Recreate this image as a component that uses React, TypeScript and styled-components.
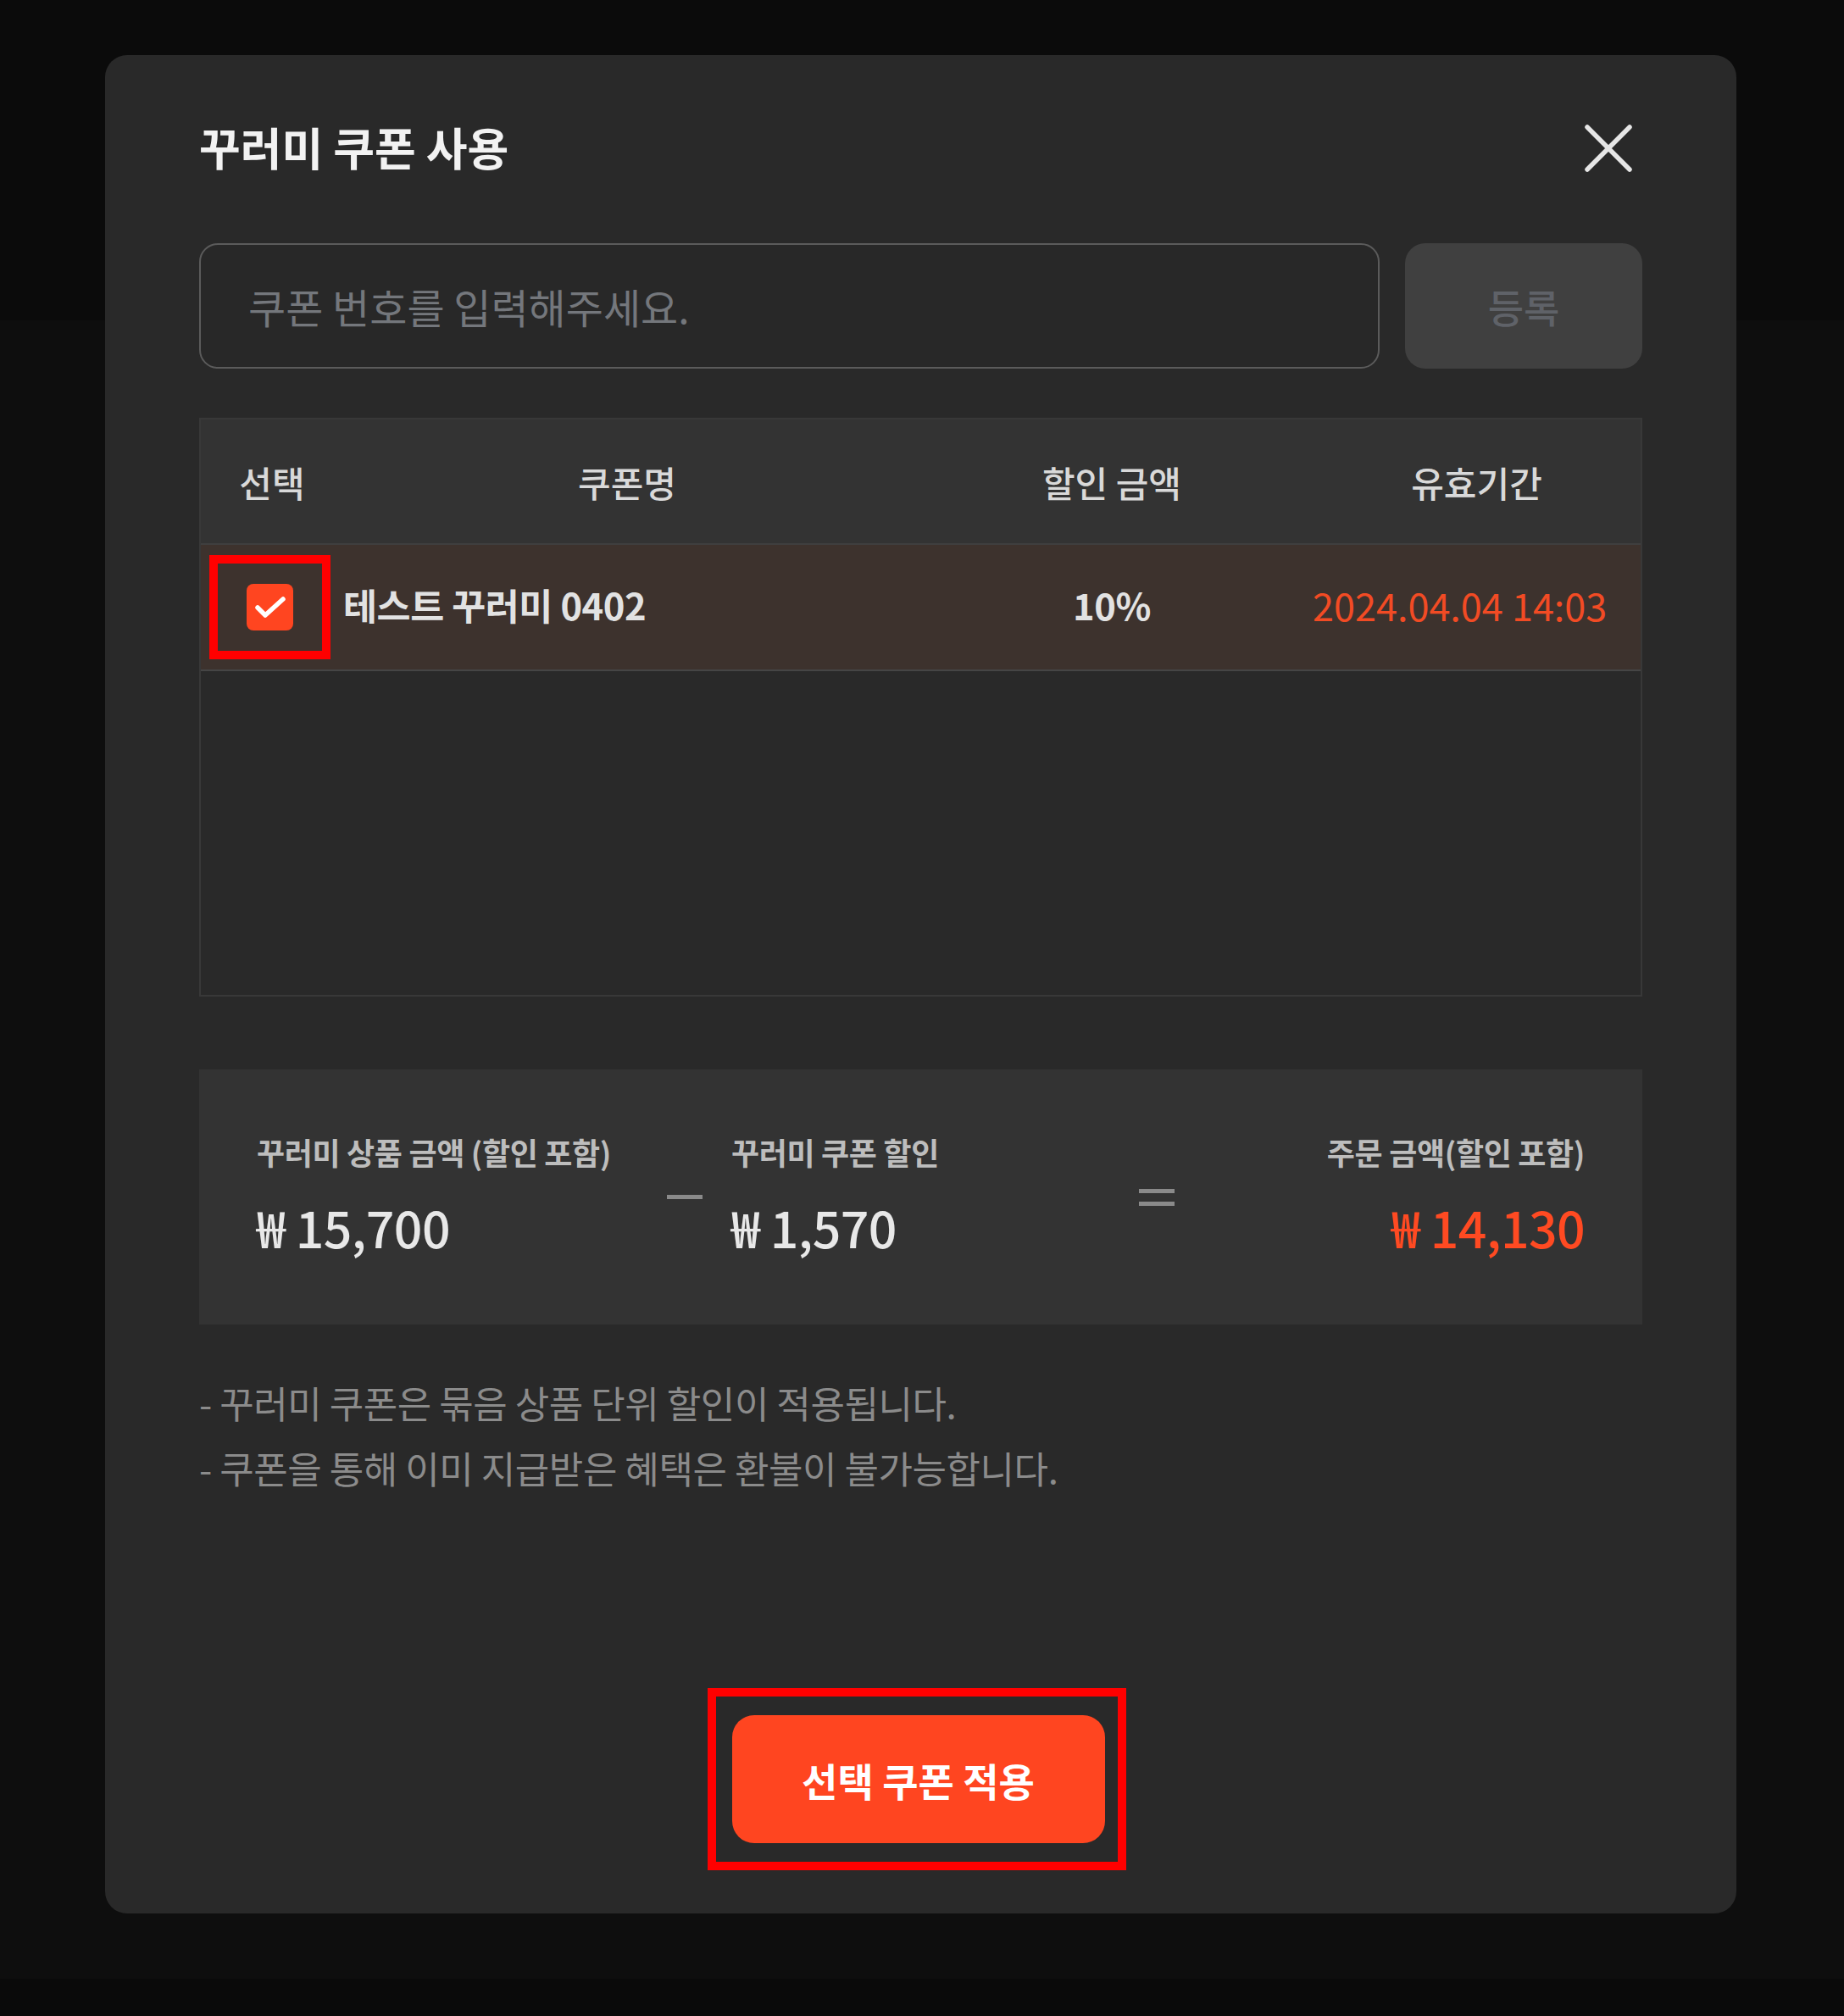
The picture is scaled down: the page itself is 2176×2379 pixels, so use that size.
import React from 'react';
import styled, { createGlobalStyle } from 'styled-components';

const GlobalStyle = createGlobalStyle`
  body {
    margin: 0;
    background: #0b0b0b;
    font-family: "Noto Sans CJK KR", "Noto Sans", sans-serif;
  }
`;

/* page behind the dimmed overlay */
const Page = styled.div`
  min-height: 2379px;
  box-sizing: border-box;
  padding: 65px 0 0 124px;
  background: linear-gradient(
    to bottom,
    #0b0b0b 0,
    #0b0b0b 378px,
    #0e0e0e 378px,
    #0e0e0e 2335px,
    #0a0a0a 2335px
  );
`;

const Modal = styled.div`
  width: 1925px;
  height: 2193px;
  box-sizing: border-box;
  padding: 0 111px 51px;
  background: #292929;
  border-radius: 26px;
  display: flex;
  flex-direction: column;
`;

const Header = styled.div`
  display: flex;
  justify-content: space-between;
  align-items: center;
  height: 60px;
  margin-top: 78px;
`;

const Title = styled.h2`
  margin: 0;
  font-size: 53px;
  font-weight: 700;
  color: #f2f2f2;
`;

const CloseButton = styled.button`
  width: 58px;
  height: 58px;
  padding: 0;
  margin: 4px 11px 0 0;
  border: 0;
  background: none;
  display: flex;
`;

const InputRow = styled.div`
  display: flex;
  gap: 30px;
  height: 148px;
  margin-top: 84px;
`;

const CouponInput = styled.input`
  flex: 1;
  box-sizing: border-box;
  height: 100%;
  padding: 0 56px;
  border: 2px solid #5b5b5b;
  border-radius: 22px;
  background: #282828;
  color: #e0e0e0;
  font-family: inherit;
  font-size: 48px;
  outline: none;

  &::placeholder {
    color: #74777c;
  }
`;

const RegisterButton = styled.button`
  width: 280px;
  height: 100%;
  border: 0;
  border-radius: 24px;
  background: #404040;
  color: #5f6268;
  font-family: inherit;
  font-size: 46px;
  font-weight: 500;
`;

const Table = styled.div`
  margin-top: 58px;
  border: 2px solid #383838;
  height: 683px;
  box-sizing: border-box;
  background: #292929;
`;

const Row = styled.div<{ $head?: boolean }>`
  display: grid;
  grid-template-columns: 168px 670px 474px 1fr;
  align-items: center;
  height: ${p => (p.$head ? '146px' : '147px')};
  background: ${p => (p.$head ? '#333333' : '#3d322d')};
  border-bottom: 2px solid ${p => (p.$head ? '#3f3f3f' : '#454545')};
`;

const HeadCell = styled.div`
  text-align: center;
  font-size: 42px;
  font-weight: 500;
  color: #d9d9d9;
`;

const Cell = styled.div<{ $align?: string }>`
  text-align: ${p => p.$align || 'center'};
  font-size: 43.5px;
  font-weight: 700;
  color: #e2e2e2;
  letter-spacing: -0.01em;
  white-space: nowrap;
  margin-top: -6px;
`;

const DateCell = styled.div`
  display: flex;
  justify-content: flex-end;
  padding-right: 45px;
  font-size: 45px;
  color: #f24b24;
  white-space: nowrap;
  margin-top: -6px;
`;

const SelectCell = styled.div`
  display: flex;
  justify-content: center;
  padding-right: 6px;
`;

/* red review outline from the screenshot */
const Highlight = styled.div<{ $pad: string }>`
  border: 10px solid #ff0000;
  padding: ${p => p.$pad};
  display: flex;
`;

const Checkbox = styled.span`
  width: 55px;
  height: 55px;
  border-radius: 8px;
  background: #ff4520;
  display: flex;
`;

const Summary = styled.div`
  margin-top: 86px;
  height: 301px;
  box-sizing: border-box;
  padding: 0 68px;
  background: #333333;
  display: grid;
  grid-template-columns: 484px 42px 515px 42px 1fr;
  align-items: center;
`;

const SumItem = styled.div<{ $right?: boolean; $indent?: boolean }>`
  display: flex;
  flex-direction: column;
  align-items: ${p => (p.$right ? 'flex-end' : 'flex-start')};
  gap: 34px;
  padding-left: ${p => (p.$indent ? '34px' : '0')};
  margin-top: -6px;
`;

const SumLabel = styled.div`
  font-size: 36px;
  font-weight: 700;
  color: #bdbdbd;
  letter-spacing: -0.01em;
  line-height: 1.2;
  white-space: nowrap;
`;

const SumValue = styled.div<{ $accent?: boolean }>`
  font-size: 59px;
  font-weight: 500;
  color: ${p => (p.$accent ? '#ff4a22' : '#e8e8e8')};
  letter-spacing: -0.01em;
  line-height: 1.1;
  white-space: nowrap;
`;

const Operator = styled.div`
  display: flex;
  flex-direction: column;
  gap: 10px;
  align-items: center;
  justify-content: center;
`;

const Bar = styled.span`
  width: 42px;
  height: 5px;
  background: #8a8a8a;
`;

const Notes = styled.ul`
  margin: 54px 0 0;
  padding: 0;
  list-style: none;
`;

const Note = styled.li`
  font-size: 44px;
  line-height: 77px;
  color: #8b8b8b;
  letter-spacing: -0.01em;
`;

const Footer = styled.div`
  margin-top: auto;
  display: flex;
  justify-content: center;
  padding-right: 10px;
`;

const ApplyButton = styled.button`
  width: 440px;
  height: 151px;
  border: 0;
  border-radius: 26px;
  background: #ff4520;
  color: #ffffff;
  font-family: inherit;
  font-size: 46px;
  font-weight: 700;
`;

const CloseIcon = () => (
  <svg width="58" height="58" viewBox="0 0 58 58">
    <path d="M4 4 L54 54 M54 4 L4 54" stroke="#e6e6e6" strokeWidth="5.5" strokeLinecap="round" />
  </svg>
);

const CheckIcon = () => (
  <svg width="55" height="55" viewBox="0 0 55 55">
    <path d="M13 28 L22 37 L43 18" fill="none" stroke="#ffffff" strokeWidth="5.5" strokeLinecap="round" strokeLinejoin="round" />
  </svg>
);

export default function App() {
  return (
    <Page>
      <GlobalStyle />
      <Modal>
        <Header>
          <Title>꾸러미 쿠폰 사용</Title>
          <CloseButton aria-label="닫기">
            <CloseIcon />
          </CloseButton>
        </Header>

        <InputRow>
          <CouponInput placeholder="쿠폰 번호를 입력해주세요." />
          <RegisterButton>등록</RegisterButton>
        </InputRow>

        <Table>
          <Row $head>
            <HeadCell>선택</HeadCell>
            <HeadCell>쿠폰명</HeadCell>
            <HeadCell>할인 금액</HeadCell>
            <HeadCell>유효기간</HeadCell>
          </Row>
          <Row>
            <SelectCell>
              <Highlight $pad="24px 34px">
                <Checkbox>
                  <CheckIcon />
                </Checkbox>
              </Highlight>
            </SelectCell>
            <Cell $align="left">테스트 꾸러미 0402</Cell>
            <Cell>10%</Cell>
            <DateCell>2024.04.04 14:03</DateCell>
          </Row>
        </Table>

        <Summary>
          <SumItem>
            <SumLabel>꾸러미 상품 금액 (할인 포함)</SumLabel>
            <SumValue>₩ 15,700</SumValue>
          </SumItem>
          <Operator>
            <Bar />
          </Operator>
          <SumItem $indent>
            <SumLabel>꾸러미 쿠폰 할인</SumLabel>
            <SumValue>₩ 1,570</SumValue>
          </SumItem>
          <Operator>
            <Bar />
            <Bar />
          </Operator>
          <SumItem $right>
            <SumLabel>주문 금액(할인 포함)</SumLabel>
            <SumValue $accent>₩ 14,130</SumValue>
          </SumItem>
        </Summary>

        <Notes>
          <Note>- 꾸러미 쿠폰은 묶음 상품 단위 할인이 적용됩니다.</Note>
          <Note>- 쿠폰을 통해 이미 지급받은 혜택은 환불이 불가능합니다.</Note>
        </Notes>

        <Footer>
          <Highlight $pad="22px 15px 22px 19px">
            <ApplyButton>선택 쿠폰 적용</ApplyButton>
          </Highlight>
        </Footer>
      </Modal>
    </Page>
  );
}
